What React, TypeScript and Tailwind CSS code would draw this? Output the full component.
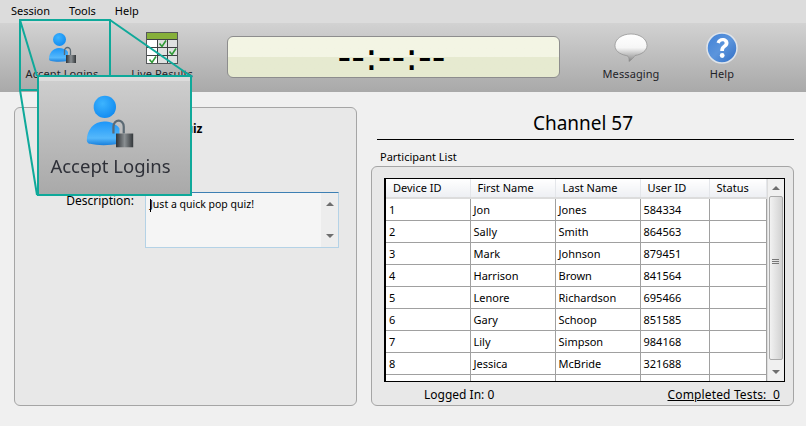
const rows = [
  ["1", "Jon", "Jones", "584334"],
  ["2", "Sally", "Smith", "864563"],
  ["3", "Mark", "Johnson", "879451"],
  ["4", "Harrison", "Brown", "841564"],
  ["5", "Lenore", "Richardson", "695466"],
  ["6", "Gary", "Schoop", "851585"],
  ["7", "Lily", "Simpson", "984168"],
  ["8", "Jessica", "McBride", "321688"],
  ["", "", "", ""],
];

const headers = [
  { label: "Device ID", w: "w-[84px]" },
  { label: "First Name", w: "w-[85px]" },
  { label: "Last Name", w: "w-[85px]" },
  { label: "User ID", w: "w-[69px]" },
  { label: "Status", w: "w-[57px]" },
];

function UserLock({ className, id }: { className: string; id: string }) {
  return (
    <svg viewBox="47 31 29 32" className={className}>
      <defs>
        <radialGradient id={id + "a"} cx="0.4" cy="0.35" r="0.8">
          <stop offset="0" stopColor="#3db4ff" />
          <stop offset="1" stopColor="#0a84ee" />
        </radialGradient>
        <linearGradient id={id + "b"} x1="0" y1="0" x2="0" y2="1">
          <stop offset="0" stopColor="#1c96f8" />
          <stop offset="0.7" stopColor="#55b8fb" />
          <stop offset="1" stopColor="#1a80dc" />
        </linearGradient>
        <linearGradient id={id + "c"} x1="0" y1="0" x2="1" y2="0">
          <stop offset="0" stopColor="#2e3236" />
          <stop offset="0.5" stopColor="#8a8f92" />
          <stop offset="1" stopColor="#33373a" />
        </linearGradient>
      </defs>
      <circle cx="58.5" cy="38.5" r="6.5" fill={`url(#${id}a)`} />
      <path d="M48 58c0-6 4-11 10-11 3 0 7 1 9 4v9c-6 1-13 1-17 0-1 0-2-1-2-2z" fill={`url(#${id}b)`} />
      <path d="M63.500 54v-4c0-2 1.500-3.500 3-3.500s3 1.500 3 3.500v4" fill="none" stroke="#5c6a74" strokeWidth="1.300" />
      <rect x="65" y="54" width="10" height="8" fill={`url(#${id}c)`} />
    </svg>
  );
}

function ResultsIcon() {
  return (
    <svg viewBox="0 0 32 32" className="w-8 h-8">
      <rect x="0.500" y="0.500" width="31" height="31" fill="#fff" stroke="#55585a" />
      <rect x="12" y="8" width="19" height="23" fill="#dfe1e1" />
      <rect x="1" y="1" width="30" height="6" fill="#86b03a" />
      <path d="M1 7.500h30M1 15.500h30M1 23.500h30M11.500 7v24M21.500 7v24" stroke="#3d4042" strokeWidth="1" fill="none" />
      <path d="M13.500 11.500l2.500 3 4-6M23.500 19.500l2.500 3 4-6M3.500 27.500l2.500 3 4-6" stroke="#2f9a36" strokeWidth="1.600" fill="none" />
    </svg>
  );
}

function BubbleIcon() {
  return (
    <svg viewBox="0 0 34 30" className="w-[34px] h-[30px]">
      <defs>
        <linearGradient id="bub" x1="0" y1="0" x2="0" y2="1">
          <stop offset="0" stopColor="#ffffff" />
          <stop offset="0.5" stopColor="#f6f6f6" />
          <stop offset="0.85" stopColor="#a8a8a8" />
          <stop offset="1" stopColor="#808080" />
        </linearGradient>
      </defs>
      <path
        d="M17 1C8 1 1 6 1 12.500c0 5 4 8.500 11 10 2 .4 3.500 1.500 3 6 3-2 5-4.500 6-6 7-1 12-5 12-10C33 6 26 1 17 1z"
        fill="url(#bub)"
        stroke="#8e8e8e"
        strokeWidth="0.700"
      />
    </svg>
  );
}

function HelpIcon() {
  return (
    <svg viewBox="0 0 32 32" className="w-8 h-8">
      <defs>
        <linearGradient id="hlp" x1="0" y1="0" x2="1" y2="1">
          <stop offset="0" stopColor="#3f80d6" />
          <stop offset="0.5" stopColor="#5c95dc" />
          <stop offset="1" stopColor="#2f6cc4" />
        </linearGradient>
      </defs>
      <circle cx="16" cy="16" r="15" fill="url(#hlp)" stroke="#dfe4ea" strokeWidth="1.500" />
      <path
        d="M10.500 10.500c1-3 3.200-4.500 6-4.500 3.500 0 6 2 6 5 0 2.200-1.300 3.400-2.800 4.500-1.200.9-1.700 1.500-1.700 3.500h-3.800c0-3 .8-4.300 2.500-5.600 1.200-.9 1.900-1.500 1.900-2.500 0-1-.8-1.700-2-1.700-1.400 0-2.300.8-2.800 2.300z"
        fill="#fff"
      />
      <circle cx="16.200" cy="23.500" r="2.400" fill="#fff" />
    </svg>
  );
}

function ToolButton({ label, children }: { label: string; children: React.ReactNode }) {
  return (
    <div className="w-[90px] h-full flex flex-col items-center pt-[9px]">
      <div className="h-8 flex items-center justify-center">{children}</div>
      <div className="mt-[3px] text-[11px] leading-[14px] tracking-[0.1px] text-[#1f2328] whitespace-nowrap">{label}</div>
    </div>
  );
}

function Arrow({ up }: { up?: boolean }) {
  return (
    <div
      className={
        up
          ? "w-0 h-0 border-x-[4px] border-x-transparent border-b-[4px] border-b-[#6e6e6e]"
          : "w-0 h-0 border-x-[4px] border-x-transparent border-t-[4px] border-t-[#6e6e6e]"
      }
    />
  );
}

export default function App() {
  return (
    <div className="relative w-[806px] h-[426px] overflow-hidden bg-[#f0f0f0] text-[11px] text-black font-['Noto_Sans',sans-serif]">
      {/* menu */}
      <div className="h-[23px] bg-[#dcdcdc] flex items-center pl-[11px] gap-[19px]">
        <span>Session</span>
        <span>Tools</span>
        <span>Help</span>
      </div>

      {/* toolbar */}
      <div className="h-[69px] bg-gradient-to-b from-[#d2d2d2] to-[#a9a9a9] flex pl-[17px]">
        <ToolButton label="Accept Logins">
          <UserLock id="small" className="w-[29px] h-8" />
        </ToolButton>
        <div className="ml-[10px]">
          <ToolButton label="Live Results">
            <ResultsIcon />
          </ToolButton>
        </div>
        <div className="ml-[20px] mt-[13px] w-[333px] h-[42px] pr-[4px] rounded-[6px] border border-[#8d8d8d] bg-gradient-to-b from-[#f3f5e4] from-50% to-[#e6ead0] to-50% flex items-center justify-center text-[38px] leading-none font-['DejaVu_Sans',sans-serif]">
          --:--:--
        </div>
        <div className="ml-[26px]">
          <ToolButton label="Messaging">
            <BubbleIcon />
          </ToolButton>
        </div>
        <div className="ml-px">
          <ToolButton label="Help">
            <HelpIcon />
          </ToolButton>
        </div>
      </div>

      {/* body */}
      <div className="flex pl-[14px]">
        <div className="mt-[15px] w-[343px] h-[299px] rounded-[6px] border border-[#a5a5a5] bg-[#e8e8e8]">
          <div className="flex items-center mt-[13px] h-[16px]">
            <div className="w-[120px] text-right" />
            <div className="ml-[15px] text-[12px] font-bold whitespace-nowrap">Pop Quiz</div>
          </div>
          <div className="flex mt-[55px]">
            <div className="w-[119px] text-right text-[12px] leading-[18px]">Description:</div>
            <div className="ml-[11px] w-[194px] h-[56px] flex bg-[#f5f5f5] border border-[#b4d2e6] border-t-[#3d7fb3] text-[10.500px]">
              <div className="flex-1 pl-[4px] pt-[2px] leading-[18px] whitespace-nowrap">
                <span className="inline-block w-px h-[13px] -mr-px align-middle bg-black" />
                Just a quick pop quiz!
              </div>
              <div className="w-[17px] bg-[#ededed] flex flex-col items-center justify-between py-[9px]">
                <Arrow up />
                <Arrow />
              </div>
            </div>
          </div>
        </div>

        <div className="ml-[14px] w-[423px] flex flex-col">
          <div className="h-[48px] ml-[6px] pr-[5px] flex items-end justify-center pb-[2px] border-b border-black text-[19px] leading-[28px]">
            Channel 57
          </div>
          <div className="pl-[9px] mt-[9px] h-[16px] leading-[16px]">Participant List</div>
          <div className="mt-px h-[240px] rounded-[6px] border border-[#a5a5a5] bg-[#e8e8e8] pl-[12px] pt-[11px]">
            <div className="flex w-[401px] h-[204px] border border-black border-l-2 bg-white overflow-hidden">
              <table className="w-[380px] table-fixed border-collapse self-start">
                <thead>
                  <tr className="h-[19px]">
                    {headers.map((h) => (
                      <th
                        key={h.label}
                        className={`${h.w} p-0 pl-[7px] font-normal text-left border-r border-[#e4e6ea] border-b-2 border-b-[#dcdcdc] bg-gradient-to-b from-white to-[#edeff3]`}
                      >
                        {h.label}
                      </th>
                    ))}
                  </tr>
                </thead>
                <tbody>
                  {rows.map((r, i) => (
                    <tr key={i} className="h-[22px]">
                      {r.map((c, j) => (
                        <td key={j} className="p-0 pl-[3px] pt-[2px] border border-[#a0a0a0] border-l-0">
                          {c}
                        </td>
                      ))}
                      <td className="p-0 border border-[#a0a0a0] border-l-0" />
                    </tr>
                  ))}
                </tbody>
              </table>
              <div className="w-[18px] bg-[#f0f0f0] flex flex-col items-center pt-[7px] border-l border-[#dcdcdc]">
                <Arrow up />
                <div className="mt-[6px] w-[14px] h-[164px] rounded-[2px] border border-[#a9a9a9] bg-gradient-to-r from-[#f2f2f2] to-[#d2d2d2] flex flex-col items-center pt-[62px] gap-[1px]">
                  <div className="w-[7px] h-px bg-[#777]" />
                  <div className="w-[7px] h-px bg-[#777]" />
                  <div className="w-[7px] h-px bg-[#777]" />
                </div>
                <div className="mt-[10px]">
                  <Arrow />
                </div>
              </div>
            </div>
            <div className="flex justify-between pl-[40px] pr-[13px] mt-[5px] text-[12px] leading-[16px]">
              <span>Logged In: 0</span>
              <span className="underline whitespace-pre tracking-[0.150px]">Completed Tests:  0</span>
            </div>
          </div>
        </div>
      </div>

      {/* zoom callout */}
      <svg className="absolute inset-0 w-full h-full" viewBox="0 0 806 426">
        <path d="M20 20L37 76M110 20L192 77M20 90L37 195" stroke="#0fa99a" strokeWidth="2" fill="none" />
      </svg>
      <div className="absolute left-[19px] top-[19px] w-[92px] h-[72px] border-2 border-[#0fa99a]" />
      <div className="absolute left-[37px] top-[75px] w-[155px] h-[121px] border-2 border-[#0fa99a] bg-gradient-to-b from-[#cfcfcf] to-[#a9a9a9] flex flex-col items-center">
        <div className="self-stretch h-[4px] bg-[#dcdcdc]" />
        <UserLock id="big" className="w-[50px] h-[55px] mt-[13px] mr-[10px] blur-[0.4px]" />
        <div className="mt-[6px] mr-[8px] text-[18.500px] leading-[22px] text-[#2e3038] whitespace-nowrap blur-[0.4px]">Accept Logins</div>
      </div>
    </div>
  );
}
